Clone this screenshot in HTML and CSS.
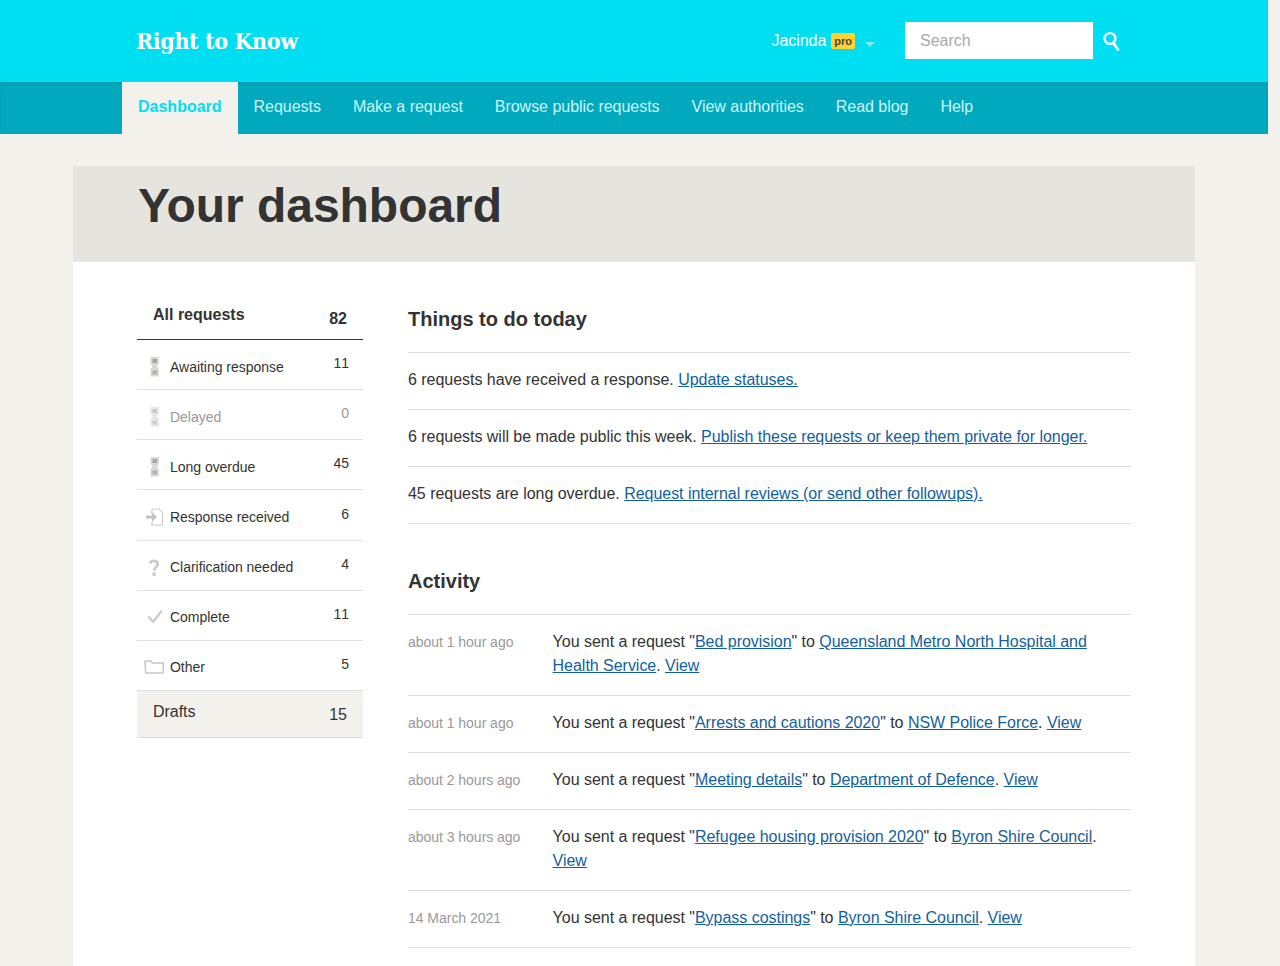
FILE: index.html
```html
<!DOCTYPE html>
<html lang="en">
<head>
    <meta charset="UTF-8">
    <meta name="viewport" content="width=device-width, initial-scale=1.0">
    <title>Your dashboard</title>
    <link rel="stylesheet" href="styles.css">
</head>
<body>
    <header class="banner">
        <div class="banner-inner">
            <a class="logo" href="#">Right to Know</a>
            <div class="account">
                <span class="account-name">Jacinda</span>
                <span class="pro-badge">pro</span>
                <span class="caret"></span>
            </div>
            <form class="search">
                <input class="search-input" type="text" placeholder="Search">
                <svg class="search-icon" width="18" height="21" viewBox="0 0 18 21">
                    <circle cx="7" cy="8.500" r="5.400" fill="none" stroke="#fff" stroke-width="2.400"/>
                    <path d="M10.500 13l5 7.500" fill="none" stroke="#fff" stroke-width="2.800"/>
                </svg>
            </form>
        </div>
    </header>

    <nav class="navbar">
        <div class="navbar-inner">
            <a class="nav-link active" href="#">Dashboard</a>
            <a class="nav-link" href="#">Requests</a>
            <a class="nav-link" href="#">Make a request</a>
            <a class="nav-link" href="#">Browse public requests</a>
            <a class="nav-link" href="#">View authorities</a>
            <a class="nav-link" href="#">Read blog</a>
            <a class="nav-link" href="#">Help</a>
        </div>
    </nav>

    <main class="card">
        <div class="card-title">
            <h1>Your dashboard</h1>
        </div>
        <div class="card-body">
            <aside class="sidebar">
                <a class="side-head" href="#"><span>All requests</span><span class="side-head-count">82</span></a>
                <ul class="side-list">
                    <li class="side-item">
                        <svg class="side-icon" width="24" height="22" viewBox="0 0 24 22"><use href="#hourglass"/></svg>
                        <span class="side-label">Awaiting response</span><span class="side-count">11</span>
                    </li>
                    <li class="side-item muted">
                        <svg class="side-icon" width="24" height="22" viewBox="0 0 24 22"><use href="#hourglass"/></svg>
                        <span class="side-label">Delayed</span><span class="side-count">0</span>
                    </li>
                    <li class="side-item">
                        <svg class="side-icon" width="24" height="22" viewBox="0 0 24 22"><use href="#hourglass"/></svg>
                        <span class="side-label">Long overdue</span><span class="side-count">45</span>
                    </li>
                    <li class="side-item">
                        <svg class="side-icon" width="24" height="22" viewBox="0 0 24 22">
                            <path d="M9 3h7l3.500 3.500v12.500h-10.500v-3M9 8v-5" fill="none" stroke="#ccc" stroke-width="1.200"/>
                            <path d="M3 9.500h6v-3.500l5 5-5 5v-3.500h-6z" fill="#c4c4c4"/>
                        </svg>
                        <span class="side-label">Response received</span><span class="side-count">6</span>
                    </li>
                    <li class="side-item">
                        <svg class="side-icon" width="24" height="22" viewBox="0 0 24 22">
                            <path d="M7.200 6.500c.5-3.500 7.500-3.800 7.500.4 0 3.100-3.600 3.100-3.600 6.800" fill="none" stroke="#ccc" stroke-width="2.800"/>
                            <rect x="9.400" y="15.500" width="3.400" height="3.400" fill="#ccc"/>
                        </svg>
                        <span class="side-label">Clarification needed</span><span class="side-count">4</span>
                    </li>
                    <li class="side-item">
                        <svg class="side-icon" width="24" height="22" viewBox="0 0 24 22">
                            <path d="M5.300 9.700l5 5 8.400-11" fill="none" stroke="#ccc" stroke-width="2.400"/>
                        </svg>
                        <span class="side-label">Complete</span><span class="side-count">11</span>
                    </li>
                    <li class="side-item">
                        <svg class="side-icon" width="24" height="22" viewBox="0 0 24 22">
                            <path d="M2.700 16l-.7-12h6l1.500 2h11l-.5 10z" fill="none" stroke="#c8c8c8" stroke-width="1.500"/>
                        </svg>
                        <span class="side-label">Other</span><span class="side-count">5</span>
                    </li>
                </ul>
                <a class="side-drafts" href="#"><span>Drafts</span><span class="side-drafts-count">15</span></a>
            </aside>

            <section class="content">
                <h2 class="section-title">Things to do today</h2>
                <ul class="todo-list">
                    <li class="todo-item">6 requests have received a response. <a href="#">Update statuses.</a></li>
                    <li class="todo-item">6 requests will be made public this week. <a href="#">Publish these requests or keep them private for longer.</a></li>
                    <li class="todo-item">45 requests are long overdue. <a href="#">Request internal reviews (or send other followups).</a></li>
                </ul>

                <h2 class="section-title activity-title">Activity</h2>
                <ul class="activity-list">
                    <li class="activity-item">
                        <span class="activity-time">about 1 hour ago</span>
                        <p class="activity-text">You sent a request "<a href="#">Bed provision</a>" to <a href="#">Queensland Metro North Hospital and Health Service</a>. <a href="#">View</a></p>
                    </li>
                    <li class="activity-item">
                        <span class="activity-time">about 1 hour ago</span>
                        <p class="activity-text">You sent a request "<a href="#">Arrests and cautions 2020</a>" to <a href="#">NSW Police Force</a>. <a href="#">View</a></p>
                    </li>
                    <li class="activity-item">
                        <span class="activity-time">about 2 hours ago</span>
                        <p class="activity-text">You sent a request "<a href="#">Meeting details</a>" to <a href="#">Department of Defence</a>. <a href="#">View</a></p>
                    </li>
                    <li class="activity-item">
                        <span class="activity-time">about 3 hours ago</span>
                        <p class="activity-text">You sent a request "<a href="#">Refugee housing provision 2020</a>" to <a href="#">Byron Shire Council</a>. <a href="#">View</a></p>
                    </li>
                    <li class="activity-item">
                        <span class="activity-time">14 March 2021</span>
                        <p class="activity-text">You sent a request "<a href="#">Bypass costings</a>" to <a href="#">Byron Shire Council</a>. <a href="#">View</a></p>
                    </li>
                </ul>
            </section>
        </div>
    </main>

    <svg class="svg-defs" width="0" height="0">
        <symbol id="hourglass" viewBox="0 0 24 22">
            <path d="M7.500 1h8.500v6.500l-2 3 2 3v7h-8.500v-7l2-3-2-3z" fill="#d8d8d4"/>
            <rect x="9.500" y="3" width="4.500" height="4" fill="#a4a4a2"/>
            <rect x="9.500" y="14.500" width="4.500" height="4" fill="#b0b0ae"/>
        </symbol>
    </svg>
</body>
</html>
```

FILE: styles.css
```css
* {
    box-sizing: border-box;
}
html, body {
    height: 966px;
    overflow: hidden;
}
body {
    font-family: "Liberation Sans", Arial, sans-serif;
    font-size: 16px;
    letter-spacing: -0.03px;
    background-color: #f3f1ec;
    color: #333;
    margin: 0;
}
a {
    color: #125f9e;
}

/* cabecera */
.banner {
    background-color: #00dff2;
    width: 1268px;
    height: 82px;
}
.banner-inner {
    display: flex;
    align-items: center;
    height: 82px;
    padding: 0 147px 0 136px;
}
.logo {
    font-family: "DejaVu Serif Condensed", "DejaVu Serif", serif;
    font-weight: bold;
    font-size: 23px;
    letter-spacing: -0.38px;
    color: #fff;
    text-decoration: none;
    margin: -2px auto 0 0;
}
.account {
    display: flex;
    align-items: center;
    color: #fff;
    margin-right: 30px;
}
.account-name {
    margin-right: 5px;
}
.pro-badge {
    background-color: #ffd22e;
    color: #444;
    font-size: 11px;
    font-weight: bold;
    line-height: 16px;
    padding: 0 3px;
    border-radius: 2px;
}
.caret {
    width: 0;
    height: 0;
    margin: 7px 0 0 10px;
    border-left: 5px solid transparent;
    border-right: 5px solid transparent;
    border-top: 5px solid rgba(255, 255, 255, 0.5);
}
.search {
    display: flex;
    align-items: center;
    margin-top: -1px;
}
.search-input {
    width: 188px;
    height: 37px;
    border: none;
    padding: 0 15px;
    font-family: inherit;
    font-size: 16px;
    background: #fff;
}
.search-input::placeholder {
    color: #aaa;
}
.search-icon {
    margin-left: 10px;
}

/* navegacion */
.navbar {
    background-color: #00a9bd;
    width: 1268px;
    height: 52px;
    box-shadow: inset 0 2px 3px rgba(0, 0, 0, 0.08);
}
.navbar-inner {
    display: flex;
    padding-left: 122px;
}
.nav-link {
    color: #cdf5f9;
    text-decoration: none;
    line-height: 49px;
    height: 52px;
    padding: 0 16px;
}
.nav-link.active {
    background-color: #f3f1ec;
    color: #00dff2;
    font-weight: bold;
    letter-spacing: 0;
}

/* tarjeta */
.card {
    width: 1122px;
    height: 832px;
    margin: 32px 0 0 73px;
    background: #fff;
}
.card-title {
    background-color: #e5e4df;
    height: 96px;
    padding-left: 65px;
}
h1 {
    margin: 0;
    font-size: 48px;
    line-height: 80px;
    color: #333;
}
.card-body {
    display: flex;
    padding: 32px 64px 0;
}

/* lateral */
.sidebar {
    width: 226px;
    margin-right: 45px;
    flex-shrink: 0;
}
.side-head {
    display: flex;
    justify-content: space-between;
    height: 46px;
    padding: 12px 16px 0;
    border-bottom: 1px solid #333;
    color: #333;
    font-weight: bold;
    letter-spacing: 0;
    text-decoration: none;
}
.side-head-count {
    padding-top: 4px;
}
.side-list {
    list-style: none;
    margin: 0;
    padding: 0;
}
.side-item {
    display: flex;
    height: 50.15px;
    padding-left: 6px;
    border-bottom: 1px solid #e0e0e0;
    font-size: 14px;
    line-height: 20px;
}
.side-item .side-icon {
    margin-top: 16px;
    flex-shrink: 0;
}
.side-item .side-label {
    margin: 16.55px 0 0 3px;
}
.side-item .side-count {
    margin: 13.2px 14px 0 auto;
    font-kerning: none;
}
.side-item.muted {
    color: #999;
}
.side-item.muted .side-icon {
    opacity: 0.6;
}
.side-drafts {
    display: flex;
    justify-content: space-between;
    height: 47px;
    padding: 12px 16px 0;
    background-color: #f3f1ec;
    border-bottom: 1px solid #ddd;
    color: #333;
    text-decoration: none;
}
.side-drafts-count {
    padding-top: 3px;
}

/* contenido */
.content {
    flex: 1;
}
.section-title {
    margin: 0;
    font-size: 20px;
    line-height: 24px;
    letter-spacing: 0;
    padding: 13px 0 21px;
    border-bottom: 1px solid #ddd;
}
.activity-title {
    padding-top: 0;
    margin-top: 45px;
}
.todo-list, .activity-list {
    list-style: none;
    margin: 0;
    padding: 0;
}
.todo-item {
    line-height: 24px;
    padding: 15px 0 17px;
    border-bottom: 1px solid #ddd;
}
.activity-item {
    display: flex;
    padding: 15px 0 17px;
    border-bottom: 1px solid #ddd;
    line-height: 24px;
}
.activity-time {
    width: 144.6px;
    flex-shrink: 0;
    font-size: 14px;
    color: #999;
}
.activity-text {
    margin: 0;
}
.svg-defs {
    position: absolute;
}
```
